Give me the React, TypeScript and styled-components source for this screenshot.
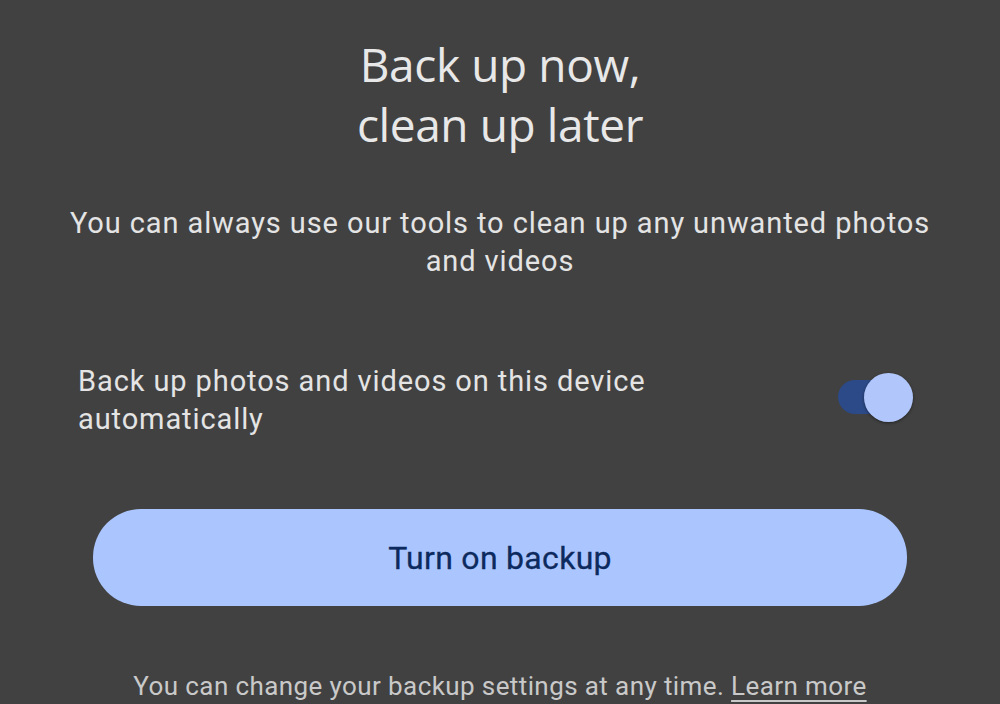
import * as React from 'react'
import styled, { createGlobalStyle } from 'styled-components'

const GlobalStyle = createGlobalStyle`
  html, body {
    margin: 0;
    padding: 0;
    background: #414141;
    height: 704px;
    overflow: hidden;
  }
`

const Page = styled.div`
  width: 1000px;
  height: 704px;
  box-sizing: border-box;
  padding: 34px 0 0;
  display: flex;
  flex-direction: column;
  align-items: center;
  font-family: Roboto, 'Noto Sans', sans-serif;
  color: #e6e6e6;
`

const Title = styled.h1`
  margin: 0;
  font-family: 'Open Sans', Roboto, sans-serif;
  font-weight: 400;
  font-size: 46px;
  line-height: 60px;
  text-align: center;
  color: #e8e8e8;
  letter-spacing: -0.4px;
`

const Lead = styled.p`
  margin: 50px 0 0;
  width: 900px;
  font-size: 29px;
  line-height: 38px;
  letter-spacing: 0.9px;
  text-align: center;
  color: #e4e4e4;
`

const ToggleRow = styled.div`
  margin-top: 82px;
  width: 844px;
  display: flex;
  align-items: center;
  justify-content: space-between;
`

const ToggleLabel = styled.span`
  font-size: 29px;
  line-height: 38px;
  letter-spacing: 0.9px;
  color: #e4e4e4;
  max-width: 650px;
`

const Track = styled.div<{ $on: boolean }>`
  position: relative;
  width: 62px;
  height: 34px;
  border-radius: 17px;
  background: ${p => (p.$on ? '#2c4a88' : '#666')};
  margin: 0 22px 6px 0;
  flex-shrink: 0;
`

const Thumb = styled.div<{ $on: boolean }>`
  position: absolute;
  top: 50%;
  left: ${p => (p.$on ? '26px' : '-12px')};
  width: 49px;
  height: 49px;
  margin-top: -24.5px;
  border-radius: 50%;
  background: #b1c7fc;
  box-shadow: 0 1px 3px rgba(0, 0, 0, 0.45);
`

const PrimaryButton = styled.button`
  margin-top: 71px;
  width: 814px;
  height: 97px;
  border: none;
  border-radius: 48px;
  background: #abc6fe;
  color: #0d2a5e;
  font-family: Roboto, sans-serif;
  font-weight: 400;
  font-size: 32px;
  letter-spacing: 0.3px;
  -webkit-text-stroke: 0.3px #0d2a5e;
  cursor: pointer;
`

const Footnote = styled.p`
  margin: 63px 0 0;
  font-size: 26px;
  line-height: 34px;
  letter-spacing: 0.4px;
  color: #c9c9c9;
  text-align: center;
`

const LearnMore = styled.a`
  color: #c9c9c9;
  text-decoration: underline;
  text-underline-offset: 5px;
  text-decoration-thickness: 2px;
`

const App = () => {
  const [on, setOn] = React.useState(true)

  return (
    <>
      <GlobalStyle />
      <Page>
        <Title>
          Back up now,
          <br />
          clean up later
        </Title>
        <Lead>You can always use our tools to clean up any unwanted photos and videos</Lead>
        <ToggleRow>
          <ToggleLabel>Back up photos and videos on this device automatically</ToggleLabel>
          <Track $on={on} onClick={() => setOn(!on)}>
            <Thumb $on={on} />
          </Track>
        </ToggleRow>
        <PrimaryButton>Turn on backup</PrimaryButton>
        <Footnote>
          You can change your backup settings at any time. <LearnMore href="#">Learn more</LearnMore>
        </Footnote>
      </Page>
    </>
  )
}

export default App
